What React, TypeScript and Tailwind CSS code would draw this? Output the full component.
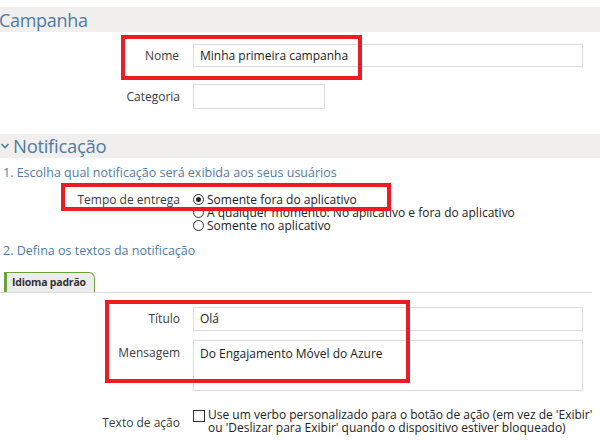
import React from "react";

const font = { fontFamily: '"Open Sans", "Noto Sans", sans-serif' };

function Radio({ checked }: { checked?: boolean }) {
  return (
    <span className="w-[11px] h-[11px] rounded-full border border-[#333] flex items-center justify-center shrink-0 bg-white">
      {checked && <span className="w-[5px] h-[5px] rounded-full bg-[#222]" />}
    </span>
  );
}

export default function App() {
  return (
    <div className="relative w-[600px] h-[445px] overflow-hidden bg-white text-[#3b3b3b]" style={font}>
      {/* Campanha header */}
      <div className="mt-[7px] h-[25px] bg-[#f0efed] flex items-center">
        <span className="text-[18px] leading-none text-[#4f7ba3] -ml-[1px] tracking-[-0.3px]">Campanha</span>
      </div>

      {/* Nome */}
      <div className="mt-[12px] flex items-center">
        <div className="w-[180px] text-right text-[12px] pr-[1px]">Nome</div>
        <div className="ml-[13px] w-[390px] h-[23px] border border-[#dcdcdc] flex items-center px-[6px] text-[12px] text-[#222]">
          Minha primeira campanha
        </div>
      </div>

      {/* Categoria */}
      <div className="mt-[17px] flex items-center">
        <div className="w-[180px] text-right text-[12px]">Categoria</div>
        <div className="ml-[13px] w-[132px] h-[25px] border border-[#dcdcdc]" />
      </div>

      {/* Notificação header */}
      <div className="mt-[25px] h-[24px] bg-[#f0efed] flex items-center">
        <svg width="12" height="10" viewBox="0 0 12 10" className="ml-0">
          <path d="M1.5 3 L5 6.5 L8.5 3" fill="none" stroke="#4f7ba3" strokeWidth="1.6" />
        </svg>
        <span className="ml-[1px] text-[18.5px] leading-none text-[#4f7ba3] tracking-[-0.3px]">Notificação</span>
      </div>

      <div className="mt-[7px] h-[16px] flex items-center pl-[3px] text-[12.5px] text-[#4f7ba3]">
        1. Escolha qual notificação será exibida aos seus usuários
      </div>

      {/* Tempo de entrega */}
      <div className="mt-[12px] flex">
        <div className="w-[180px] text-right text-[12px] leading-[13px]">Tempo de entrega</div>
        <div className="ml-[13px] flex flex-col text-[12px] leading-[13px] text-[#222]">
          <div className="flex items-center gap-[3px]"><Radio checked />Somente fora do aplicativo</div>
          <div className="flex items-center gap-[3px]"><Radio />A qualquer momento: No aplicativo e fora do aplicativo</div>
          <div className="flex items-center gap-[3px]"><Radio />Somente no aplicativo</div>
        </div>
      </div>

      <div className="mt-[11px] h-[16px] flex items-center pl-[3px] text-[12.5px] text-[#4f7ba3]">
        2. Defina os textos da notificação
      </div>

      {/* Tab */}
      <div className="mt-[13px] w-[592px] border-b border-[#dcdcdc] flex">
        <div className="ml-[4px] h-[20px] w-[91px] bg-[#ececec] border-l-[3px] border-t border-r border-[#6aa23a] rounded-tr-[6px] flex items-center pl-[5px] text-[10.5px] font-bold text-[#333] tracking-[-0.2px]">
          Idioma padrão
        </div>
      </div>

      {/* Título */}
      <div className="mt-[14px] flex items-center">
        <div className="w-[180px] text-right text-[12px]">Título</div>
        <div className="ml-[13px] w-[390px] h-[24px] border border-[#dcdcdc] flex items-center px-[6px] text-[12px] text-[#222]">
          Olá
        </div>
      </div>

      {/* Mensagem */}
      <div className="mt-[9px] flex">
        <div className="w-[180px] text-right text-[12px] pt-[4px]">Mensagem</div>
        <div className="ml-[13px] w-[390px] h-[51px] border border-[#dcdcdc] px-[6px] pt-[4px] text-[12px] text-[#222]">
          Do Engajamento Móvel do Azure
        </div>
      </div>

      {/* Texto de ação */}
      <div className="mt-[17px] flex">
        <div className="w-[180px] text-right text-[12px] pt-[6px]">Texto de ação</div>
        <div className="ml-[13px] flex text-[12px] leading-[13px] text-[#222]">
          <span className="mt-[2px] w-[12px] h-[12px] border border-[#333] shrink-0 mr-[3px]" />
          <span>
            Use um verbo personalizado para o botão de ação (em vez de 'Exibir'
            <br />
            ou 'Deslizar para Exibir' quando o dispositivo estiver bloqueado)
          </span>
        </div>
      </div>

      {/* Red highlight boxes */}
      <div className="absolute left-[121px] top-[35px] w-[241px] h-[45px] border-[4px] border-[#ed1c24]" />
      <div className="absolute left-[61px] top-[183px] w-[330px] h-[28px] border-[4px] border-[#ed1c24]" />
      <div className="absolute left-[105px] top-[300px] w-[305px] h-[83px] border-[4px] border-[#ed1c24]" />
    </div>
  );
}
